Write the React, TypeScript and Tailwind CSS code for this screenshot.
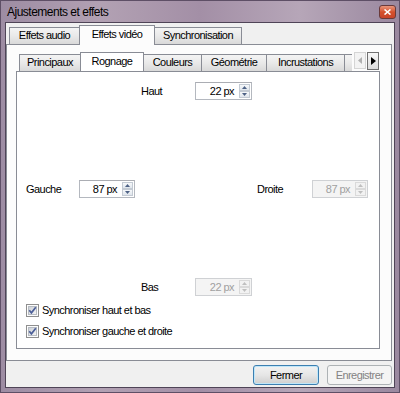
import React from 'react';

const tabUnsel =
  'h-[17px] border border-b-0 border-[#898c95] bg-gradient-to-b from-[#f4f4f4] via-[#e9e9e9] to-[#d9d9d9] flex items-center justify-center leading-none pb-px';
const tabSel =
  'relative z-10 -mb-px h-[20px] border border-b-0 border-[#898c95] bg-[#fcfcfc] flex items-center justify-center leading-none pb-[3px]';

function SpinArrow({ up, disabled }: { up?: boolean; disabled?: boolean }) {
  return (
    <div
      className={`flex-1 flex items-center justify-center border ${
        disabled
          ? 'border-[#dadada] bg-[#f2f2f2]'
          : 'border-[#c3cad3] bg-gradient-to-b from-[#f6f8fa] to-[#dfe5ec]'
      }`}
    >
      <svg width="5" height="3" viewBox="0 0 5 3">
        <path
          d={up ? 'M0 3 L2.5 0 L5 3 Z' : 'M0 0 L2.5 3 L5 0 Z'}
          fill={disabled ? '#bfbfbf' : '#4d6185'}
        />
      </svg>
    </div>
  );
}

function Spin({ value, disabled, w = 'w-[56px]' }: { value: string; disabled?: boolean; w?: string }) {
  return (
    <div
      className={`${w} h-[18px] flex border ${
        disabled
          ? 'border-[#cfd1d4] bg-[#f4f4f4] text-[#a0a0a0]'
          : 'border-[#b4b8bf] border-t-[#abadb3] bg-white text-black'
      }`}
    >
      <div className="flex-1 text-right pr-[5px] leading-[16px]">{value}</div>
      <div className="w-[12px] flex flex-col py-px pr-px">
        <SpinArrow up disabled={disabled} />
        <SpinArrow disabled={disabled} />
      </div>
    </div>
  );
}

function Check({ label }: { label: string }) {
  return (
    <div className="flex items-center gap-[3px] h-[14px]">
      <svg width="13" height="13" viewBox="0 0 13 13">
        <defs>
          <linearGradient id="cbg" x1="0" y1="0" x2="1" y2="1">
            <stop offset="0" stopColor="#cbcfd5" />
            <stop offset="1" stopColor="#f6f6f6" />
          </linearGradient>
        </defs>
        <rect x="0.5" y="0.5" width="12" height="12" fill="#fdfdfd" stroke="#8f8f8f" />
        <rect x="2.5" y="2.5" width="8" height="8" fill="url(#cbg)" stroke="#b7bcc3" />
        <path d="M3.3 6.3 L5.4 8.8 L9.8 3.2" stroke="#4b5e98" strokeWidth="1.7" fill="none" />
      </svg>
      <span className="leading-none">{label}</span>
    </div>
  );
}

export default function App() {
  return (
    <div className="w-[400px] h-[393px] flex flex-col overflow-hidden border border-[#5e4f66] bg-[linear-gradient(90deg,#9d8ca3,#b2a1b3_25%,#a38fa6_50%,#b6a6b8_75%,#9a889f)] font-['Liberation_Sans',Arial,sans-serif] text-[11px] tracking-[-0.55px] text-black">
      {/* title bar */}
      <div className="h-[21px] shrink-0 flex items-center justify-between pl-[6px] pr-[3px]">
        <span className="text-[12px] tracking-[-0.5px] leading-none pt-px">Ajustements et effets</span>
        <div className="w-[17px] h-[14px] rounded-[3px] border border-[#6a3a3a] bg-gradient-to-b from-[#e8957b] via-[#d4502c] to-[#c8442a] flex items-center justify-center">
          <svg width="7" height="6" viewBox="0 0 7 6">
            <path d="M0.5 0.5 L6.5 5.5 M6.5 0.5 L0.5 5.5" stroke="#fff" strokeWidth="1.6" />
          </svg>
        </div>
      </div>

      {/* client area */}
      <div className="flex-1 mx-[4px] mb-[4px] border border-[#4f4457] bg-[#f0f0f0] flex flex-col">
        {/* outer tab row */}
        <div className="h-[21px] shrink-0 flex items-end pl-[3px]">
          <div className={`${tabUnsel} w-[71px] h-[16px]`}>Effets audio</div>
          <div className={`${tabSel} w-[76px] -ml-px`}>Effets vidéo</div>
          <div className={`${tabUnsel} w-[88px] -ml-px h-[16px]`}>Synchronisation</div>
        </div>

        {/* outer pane */}
        <div className="h-[317px] shrink-0 mr-[2px] border border-[#898c95] bg-[#fcfcfc] flex flex-col pl-[9px] pr-[11px] pb-[11px]">
          {/* inner tab row */}
          <div className="relative h-[26px] shrink-0 flex items-end">
            <div className="flex items-end pl-[3px] w-[336px] overflow-hidden">
              <div className={`${tabUnsel} w-[62px] shrink-0`}>Principaux</div>
              <div className={`${tabSel} w-[64px] shrink-0 -ml-px bg-white`}>Rognage</div>
              <div className={`${tabUnsel} w-[59px] shrink-0 -ml-px`}>Couleurs</div>
              <div className={`${tabUnsel} w-[66px] shrink-0 -ml-px`}>Géométrie</div>
              <div className={`${tabUnsel} w-[79px] shrink-0 -ml-px`}>Incrustations</div>
              <div className={`${tabUnsel} w-[60px] shrink-0 -ml-px`} />
            </div>
            {/* scroll buttons */}
            <div className="absolute right-[1px] bottom-[1px] flex gap-px">
              <div className="w-[12px] h-[17px] border border-[#d5d5d5] bg-[#f3f3f3] flex items-center justify-center">
                <svg width="4" height="7" viewBox="0 0 4 7">
                  <path d="M4 0 L0 3.5 L4 7 Z" fill="#b0b0b0" />
                </svg>
              </div>
              <div className="w-[12px] h-[18px] border border-[#707070] bg-gradient-to-b from-[#f7f7f7] to-[#dcdcdc] flex items-center justify-center">
                <svg width="5" height="8" viewBox="0 0 5 8">
                  <path d="M0 0 L5 4 L0 8 Z" fill="#000" />
                </svg>
              </div>
            </div>
          </div>

          {/* inner pane */}
          <div className="flex-1 border border-[#898c95] bg-white pt-[10px] pl-[9px] flex flex-col">
            <div className="grid grid-cols-[53px_62px_54px_62px_55px_56px] grid-rows-[18px_18px_18px] gap-y-[80px]">
              <div />
              <div />
              <div className="flex items-center">Haut</div>
              <Spin value="22 px" w="w-[57px]" />
              <div />
              <div />

              <div className="flex items-center">Gauche</div>
              <Spin value="87 px" />
              <div />
              <div />
              <div className="flex items-center">Droite</div>
              <Spin value="87 px" disabled />

              <div />
              <div />
              <div className="flex items-center">Bas</div>
              <Spin value="22 px" disabled w="w-[57px]" />
              <div />
              <div />
            </div>
            <div className="mt-[7px] flex flex-col gap-[7px]">
              <Check label="Synchroniser haut et bas" />
              <Check label="Synchroniser gauche et droite" />
            </div>
          </div>
        </div>

        {/* buttons */}
        <div className="flex-1 flex items-start justify-end gap-[8px] pt-[4px] pr-[2px]">
          <div className="w-[66px] h-[20px] rounded-[3px] border border-[#3c7fb1] bg-gradient-to-b from-[#f2f2f2] via-[#e6e6e6] to-[#cfcfcf] shadow-[inset_0_0_0_1px_#bfe6f9] flex items-center justify-center leading-none">
            Fermer
          </div>
          <div className="w-[65px] h-[20px] rounded-[3px] border border-[#adb2b5] bg-[#f4f4f4] text-[#838383] flex items-center justify-center leading-none">
            Enregistrer
          </div>
        </div>
      </div>
    </div>
  );
}
